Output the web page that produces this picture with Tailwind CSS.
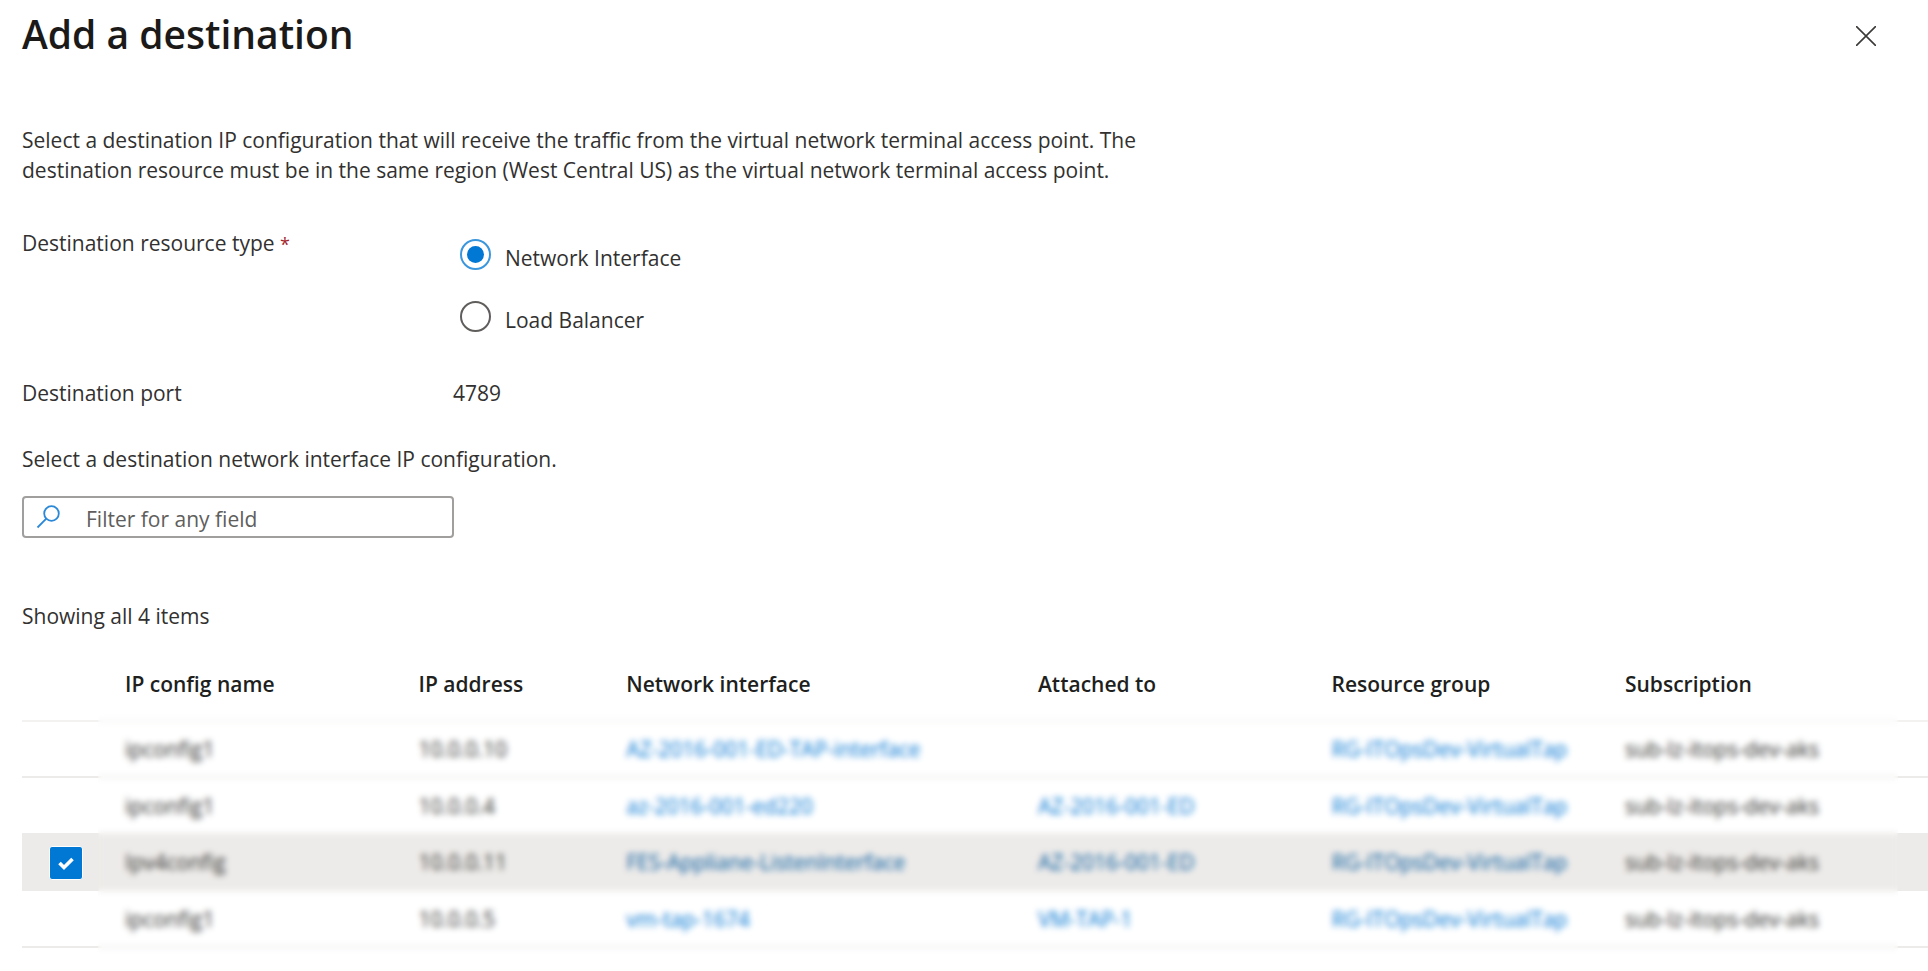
<!DOCTYPE html>
<html lang="en">

<head>
    <meta charset="UTF-8">
    <meta name="viewport" content="width=device-width, initial-scale=1.0">
    <title>Add a destination</title>
    <script src="https://cdn.jsdelivr.net/npm/@tailwindcss/browser@4"></script>
</head>

<body class="bg-white pl-[22px] font-['Segoe_UI','Open_Sans',sans-serif] text-[21px] leading-[30px] text-[#323130]">
    <header class="flex items-start justify-between pt-2 pr-[50px]">
        <h1 class="text-[39px] leading-[52px] font-semibold text-[#1b1a19]">Add a destination</h1>
        <button type="button" aria-label="Close" class="mt-4 p-0.5">
            <svg class="size-5" viewBox="0 0 20 20" fill="none" stroke="#3b3a39" stroke-width="1.6">
                <path d="M0 0L20 20M20 0L0 20" />
            </svg>
        </button>
    </header>

    <main>
        <p class="mt-[65px] max-w-[1160px]">Select a destination IP configuration that will receive the traffic from the virtual network terminal access point. The destination resource must be in the same region (West Central US) as the virtual network terminal access point.</p>

        <form>
            <div class="mt-[43px] flex" role="radiogroup" aria-labelledby="typeLabel">
                <span id="typeLabel" class="w-[431px]">Destination resource type <span class="text-lg text-[#a4262c]">*</span></span>
                <div class="flex flex-col gap-[31px] pt-[11px] pl-[7px]">
                    <label class="flex h-[31px] items-start gap-[14px]">
                        <input type="radio" name="type" checked class="grid size-[31px] appearance-none place-items-center rounded-full border-2 border-[#605e5c] checked:border-[#3a96dd] checked:before:size-[17px] checked:before:rounded-full checked:before:bg-[#0078d4]">
                        <span class="pt-1">Network Interface</span>
                    </label>
                    <label class="flex h-[31px] items-start gap-[14px]">
                        <input type="radio" name="type" class="grid size-[31px] appearance-none place-items-center rounded-full border-2 border-[#605e5c] checked:border-[#3a96dd] checked:before:size-[17px] checked:before:rounded-full checked:before:bg-[#0078d4]">
                        <span class="pt-1">Load Balancer</span>
                    </label>
                </div>
            </div>

            <div class="mt-[46px] flex">
                <span class="w-[431px]">Destination port</span>
                <span>4789</span>
            </div>

            <label for="filter" class="mt-9 block">Select a destination network interface IP configuration.</label>
            <div class="relative mt-[22px] w-[432px]">
                <svg class="absolute top-[9px] left-[14px] size-6" viewBox="0 0 24 24" fill="none" stroke="#2b88d8" stroke-width="1.8">
                    <circle cx="15.5" cy="8.5" r="7.3" />
                    <path d="M10.3 13.7L1.5 22.5" />
                </svg>
                <input id="filter" type="text" placeholder="Filter for any field"
                    class="h-[42px] w-full rounded border-2 border-[#a19f9d] pt-[3px] pl-[62px] placeholder:text-[#605e5c]">
            </div>
        </form>

        <p class="mt-[63px]">Showing all 4 items</p>

        <div class="relative mt-[38px] pb-4">
            <table class="w-full table-fixed border-collapse text-left">
                <colgroup>
                    <col class="w-[103px]">
                    <col class="w-[15.4%]">
                    <col class="w-[10.9%]">
                    <col class="w-[21.6%]">
                    <col class="w-[15.4%]">
                    <col class="w-[15.4%]">
                    <col>
                </colgroup>
                <thead>
                    <tr class="h-[52px] border-b-2 border-[#f3f2f1] align-top text-[#201f1e]">
                        <th></th>
                        <th class="font-semibold">IP config name</th>
                        <th class="font-semibold">IP address</th>
                        <th class="font-semibold">Network interface</th>
                        <th class="font-semibold">Attached to</th>
                        <th class="font-semibold">Resource group</th>
                        <th class="font-semibold">Subscription</th>
                    </tr>
                </thead>
                <tbody>
                    <tr class="h-[56px] border-b-2 border-[#edebe9] even:h-[57px]">
                        <td></td>
                        <td>ipconfig1</td>
                        <td>10.0.0.10</td>
                        <td><a href="#" class="text-[#0078d4]">AZ-2016-001-ED-TAP-interface</a></td>
                        <td></td>
                        <td><a href="#" class="text-[#0078d4]">RG-ITOpsDev-VirtualTap</a></td>
                        <td>sub-lz-itops-dev-aks</td>
                    </tr>
                    <tr class="h-[56px] border-b-2 border-[#edebe9] even:h-[57px]">
                        <td></td>
                        <td>ipconfig1</td>
                        <td>10.0.0.4</td>
                        <td><a href="#" class="text-[#0078d4]">az-2016-001-ed220</a></td>
                        <td><a href="#" class="text-[#0078d4]">AZ-2016-001-ED</a></td>
                        <td><a href="#" class="text-[#0078d4]">RG-ITOpsDev-VirtualTap</a></td>
                        <td>sub-lz-itops-dev-aks</td>
                    </tr>
                    <tr class="h-[56px] border-b-2 border-[#edebe9] bg-[#edebe9] even:h-[57px]">
                        <td class="pt-0.5 pl-[27px]">
                            <div class="grid size-[34px]">
                                <input type="checkbox" checked aria-label="Select Ipv4config" class="col-start-1 row-start-1 size-[34px] appearance-none rounded-[3px] border border-white bg-white checked:bg-[#0078d4]">
                                <svg class="pointer-events-none col-start-1 row-start-1 size-4 place-self-center" viewBox="0 0 16 16" fill="none" stroke="white" stroke-width="3.6">
                                    <path d="M1.5 8L6 12.5L14.5 4" />
                                </svg>
                            </div>
                        </td>
                        <td>Ipv4config</td>
                        <td>10.0.0.11</td>
                        <td><a href="#" class="text-[#005a9e]">FES-Appliane-ListenInterface</a></td>
                        <td><a href="#" class="text-[#005a9e]">AZ-2016-001-ED</a></td>
                        <td><a href="#" class="text-[#005a9e]">RG-ITOpsDev-VirtualTap</a></td>
                        <td>sub-lz-itops-dev-aks</td>
                    </tr>
                    <tr class="h-[56px] border-b-2 border-[#edebe9] even:h-[57px]">
                        <td></td>
                        <td>ipconfig1</td>
                        <td>10.0.0.5</td>
                        <td><a href="#" class="text-[#0078d4]">vm-tap-1674</a></td>
                        <td><a href="#" class="text-[#0078d4]">VM-TAP-1</a></td>
                        <td><a href="#" class="text-[#0078d4]">RG-ITOpsDev-VirtualTap</a></td>
                        <td>sub-lz-itops-dev-aks</td>
                    </tr>
                </tbody>
            </table>
            <!-- Privacy blur over the row data -->
            <div class="pointer-events-none absolute top-10 right-[30px] bottom-0 left-[76px] backdrop-blur-[3px]"></div>
        </div>
    </main>
</body>

</html>
